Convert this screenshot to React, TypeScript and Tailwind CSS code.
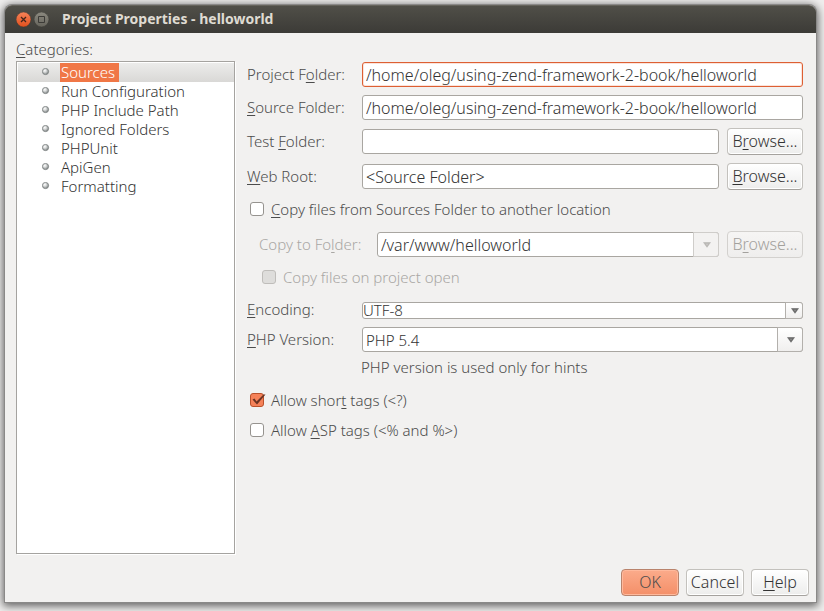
import type { ReactNode } from "react";
import clsx from "clsx";

const categories = [
  "Sources",
  "Run Configuration",
  "PHP Include Path",
  "Ignored Folders",
  "PHPUnit",
  "ApiGen",
  "Formatting",
];

/** Renders a caption whose mnemonic letter is marked by a preceding "&". */
function Mnemonic({ text }: { text: string }) {
  const at = text.indexOf("&");
  if (at < 0) return <>{text}</>;
  return (
    <span>
      {text.slice(0, at)}
      <span className="underline underline-offset-2">{text[at + 1]}</span>
      {text.slice(at + 2)}
    </span>
  );
}

function Row({ label, id, className, labelClass = "w-[115px]", children }: {
  label: string;
  id: string;
  className?: string;
  labelClass?: string;
  children: ReactNode;
}) {
  return (
    <div className={clsx("flex items-center", className)}>
      <label htmlFor={id} className={clsx("shrink-0 pb-[2px] leading-5 whitespace-nowrap", labelClass)}>
        <Mnemonic text={label} />
      </label>
      {children}
    </div>
  );
}

function TextBox({ id, value, focused }: { id: string; value: string; focused?: boolean }) {
  return (
    <input
      id={id}
      type="text"
      defaultValue={value}
      className={clsx(
        "h-[25px] min-w-0 flex-1 rounded-[3px] border bg-white px-[3px] text-base leading-5 font-light text-[#333] outline-none",
        focused ? "border-[#dd5f33] shadow-[inset_0_0_0_1px_#fbe3da]" : "border-[#a9a6a1]",
      )}
    />
  );
}

function PushButton({ label, className, primary, disabled }: {
  label: string;
  className?: string;
  primary?: boolean;
  disabled?: boolean;
}) {
  return (
    <button
      type="button"
      disabled={disabled}
      className={clsx(
        "h-[27px] shrink-0 rounded-[4px] border pb-px text-base leading-5 font-light whitespace-nowrap",
        primary && "border-[#b9836c] bg-linear-to-b from-[#fbab8b] to-[#f48f68] shadow-[inset_0_0_0_1px_#ffb99c]",
        disabled && "border-[#d3d1ce] bg-linear-to-b from-[#f6f5f4] to-[#efeeed] text-[#a3a19d]",
        !primary && !disabled &&
          "border-[#c3c1bd] border-b-[#a5a29e] bg-linear-to-b from-white to-[#ededec] text-[#333] shadow-[inset_0_0_0_1px_#fff]",
        className,
      )}
    >
      <Mnemonic text={label} />
    </button>
  );
}

function ComboBox({ id, value, size = "normal", disabled }: {
  id: string;
  value: string;
  size?: "normal" | "compact";
  disabled?: boolean;
}) {
  const compact = size === "compact";
  return (
    <div className="relative flex min-w-0 flex-1">
      <select
        id={id}
        disabled={disabled}
        className={clsx(
          "w-full appearance-none rounded-[3px] border border-[#a9a6a1] bg-white font-light text-[#333] opacity-100 outline-none",
          compact ? "h-[17px] px-0 text-[15px] leading-[15px]" : "h-[25px] px-[3px] leading-5",
          disabled ? "text-base" : "text-[15px]",
        )}
      >
        <option>{value}</option>
      </select>
      <span
        className={clsx(
          "pointer-events-none absolute inset-y-0 right-0 flex items-center justify-center rounded-r-[3px] border pt-px pl-px",
          compact ? "w-[18px]" : "w-[26px]",
          disabled
            ? "border-[#cfcdca] bg-[#f3f2f1] text-[#b5b3b0]"
            : "border-[#b3b0ac] bg-linear-to-b from-white to-[#f0efee] text-[#5f5f5f]",
        )}
      >
        <svg viewBox="0 0 8 6" className="h-[6px] w-2" aria-hidden="true">
          <path d="M.5 .5h7L4 5.300z" fill="currentColor" stroke="currentColor" strokeWidth=".5" />
          <path d="M2.200 1.500h3.600L4 4z" fill="#fff" opacity=".25" />
        </svg>
      </span>
    </div>
  );
}

function CheckBox({ id, label, checked, disabled, className }: {
  id: string;
  label: string;
  checked?: boolean;
  disabled?: boolean;
  className?: string;
}) {
  return (
    <div className={clsx("flex h-5 items-center gap-[7px]", className)}>
      <span className="relative flex">
        <input
          id={id}
          type="checkbox"
          defaultChecked={checked}
          disabled={disabled}
          className="size-[14px] appearance-none rounded-[3px] border border-[#96938f] bg-white checked:border-[#b9512b] checked:bg-[#f58158] disabled:border-[#bfbdba] disabled:bg-[#dedddb]"
        />
        {checked && (
          <svg viewBox="0 0 16 14" className="pointer-events-none absolute top-0 left-0 h-[14px] w-4" aria-hidden="true">
            <path d="M2.500 6.500 4.500 5.500 6.500 8.500 13.500 1.500 15.500 1.500 7 11.500z" fill="#6b3322" />
          </svg>
        )}
      </span>
      <label htmlFor={id} className={clsx("leading-5 whitespace-nowrap", disabled && "text-[#a9a7a4]")}>
        <Mnemonic text={label} />
      </label>
    </div>
  );
}

function Bullet() {
  return (
    <svg viewBox="0 0 8 8" className="mb-[2px] size-2 shrink-0" aria-hidden="true">
      <defs>
        <radialGradient id="pearl" cx=".38" cy=".35" r=".6">
          <stop offset="0" stopColor="#fff" />
          <stop offset=".45" stopColor="#d6d8d8" />
          <stop offset="1" stopColor="#8d9292" />
        </radialGradient>
      </defs>
      <circle cx="3.500" cy="3.500" r="3.100" fill="url(#pearl)" stroke="#777c7c" strokeWidth=".8" />
    </svg>
  );
}

function TitleBar() {
  return (
    <header className="flex h-7 items-center rounded-t-[7px] border-t border-[#66645c] bg-linear-to-b from-[#504f48] to-[#3c3b37] pl-[11px]">
      <button type="button" aria-label="Close" className="size-4">
        <svg viewBox="0 0 16 16" className="size-4" aria-hidden="true">
          <defs>
            <linearGradient id="close" x2="0" y2="1">
              <stop offset="0" stopColor="#f68359" />
              <stop offset="1" stopColor="#e2501d" />
            </linearGradient>
          </defs>
          <circle cx="7.500" cy="7.500" r="7.400" fill="url(#close)" stroke="#33322e" strokeWidth=".4" />
          <path d="m5 5 5 5m0-5-5 5" stroke="#42251b" strokeWidth="1.300" />
        </svg>
      </button>
      <button type="button" aria-label="Maximize" className="ml-[2px] size-4">
        <svg viewBox="0 0 16 16" className="size-4" aria-hidden="true">
          <defs>
            <linearGradient id="max" x2="0" y2="1">
              <stop offset="0" stopColor="#8b897f" />
              <stop offset="1" stopColor="#66645c" />
            </linearGradient>
          </defs>
          <circle cx="7.500" cy="7.500" r="7.400" fill="url(#max)" stroke="#33322e" strokeWidth=".4" />
          <path d="M4.500 4.500h6v6h-6z" fill="none" stroke="#3c3b37" strokeWidth="1" />
        </svg>
      </button>
      <h1 className="ml-3 pb-px text-sm leading-5 font-bold text-[#dfdbd2]">Project Properties - helloworld</h1>
    </header>
  );
}

export default function App() {
  return (
    <div className="min-h-screen bg-[#efeeed] pt-[5px] pr-2 pb-[9px] pl-[5px] font-['Noto_Sans',sans-serif] text-[15px] font-[350] text-[#4c4c4c]">
      <div className="flex min-h-[597px] flex-col rounded-t-[7px] bg-[#f2f1f0] shadow-[0_0_0_1px_#8a8988,0_2px_9px_2px_rgba(0,0,0,0.6)]">
        <TitleBar />
        <main className="flex flex-1 gap-3 pt-[6px] pr-[13px] pl-[11px]">
          <nav className="flex w-[219px] shrink-0 flex-col">
            <h2 id="categories" className="h-[22px] leading-5">
              <Mnemonic text="&Categories:" />
            </h2>
            <ul
              aria-labelledby="categories"
              className="h-[493px] border border-[#a5a3a0] bg-white pt-px pl-px text-[#333] shadow-[1px_1px_0_#fff]"
            >
              {categories.map((name, i) => (
                <li key={name}>
                  <button
                    type="button"
                    className={clsx(
                      "flex h-[19px] w-full items-center gap-[10px] pl-6 leading-[19px]",
                      i === 0 && "bg-linear-to-b from-[#ececeb] to-[#d9d8d6]",
                    )}
                  >
                    <Bullet />
                    <span className={clsx("px-px", i === 0 && "bg-[#f07746] pr-1 text-white")}>{name}</span>
                  </button>
                </li>
              ))}
            </ul>
          </nav>
          <form className="flex min-w-0 flex-1 flex-col pt-[22px]">
            <Row id="project" label="Project F&older:" className="h-[27px]">
              <TextBox id="project" value="/home/oleg/using-zend-framework-2-book/helloworld" focused />
            </Row>
            <Row id="source" label="&Source Folder:" className="mt-[6px] h-[27px]">
              <TextBox id="source" value="/home/oleg/using-zend-framework-2-book/helloworld" />
            </Row>
            <Row id="test" label="Test &Folder:" className="mt-[7px] h-[27px]">
              <TextBox id="test" value="" />
              <PushButton label="B&rowse..." className="ml-2 w-[76px]" />
            </Row>
            <Row id="root" label="&Web Root:" className="mt-2 h-[27px]">
              <TextBox id="root" value="<Source Folder>" />
              <PushButton label="&Browse..." className="ml-2 w-[76px]" />
            </Row>
            <CheckBox id="copy" label="&Copy files from Sources Folder to another location" className="mt-[9px] ml-[3px]" />
            <Row
              id="copyTo"
              label="Copy to Fo&lder:"
              className="mt-3 ml-3 h-[27px]"
              labelClass="w-[118px] text-[#a9a7a4]"
            >
              <ComboBox id="copyTo" value="/var/www/helloworld" disabled />
              <PushButton label="B&rowse..." className="ml-2 w-[76px]" disabled />
            </Row>
            <CheckBox id="copyOpen" label="Copy files on project open" disabled className="mt-[9px] ml-[15px]" />
            <Row id="encoding" label="&Encoding:" className="mt-[13px] h-5">
              <ComboBox id="encoding" value="UTF-8" size="compact" />
            </Row>
            <Row id="version" label="&PHP Version:" className="mt-[6px] h-[27px]">
              <ComboBox id="version" value="PHP 5.4" />
            </Row>
            <p className="mt-1 ml-[114px] leading-5">PHP version is used only for hints</p>
            <CheckBox id="short" label="Allow shor&t tags (<?)" checked className="mt-[13px] ml-[3px]" />
            <CheckBox id="asp" label="Allow &ASP tags (<% and %>)" className="mt-[10px] ml-[3px]" />
          </form>
        </main>
        <footer className="flex justify-end gap-[7px] pt-[15px] pr-[7px] pb-[6px]">
          <PushButton label="OK" primary className="w-[58px]" />
          <PushButton label="Cancel" className="w-[58px]" />
          <PushButton label="&Help" className="w-[58px]" />
        </footer>
      </div>
    </div>
  );
}
